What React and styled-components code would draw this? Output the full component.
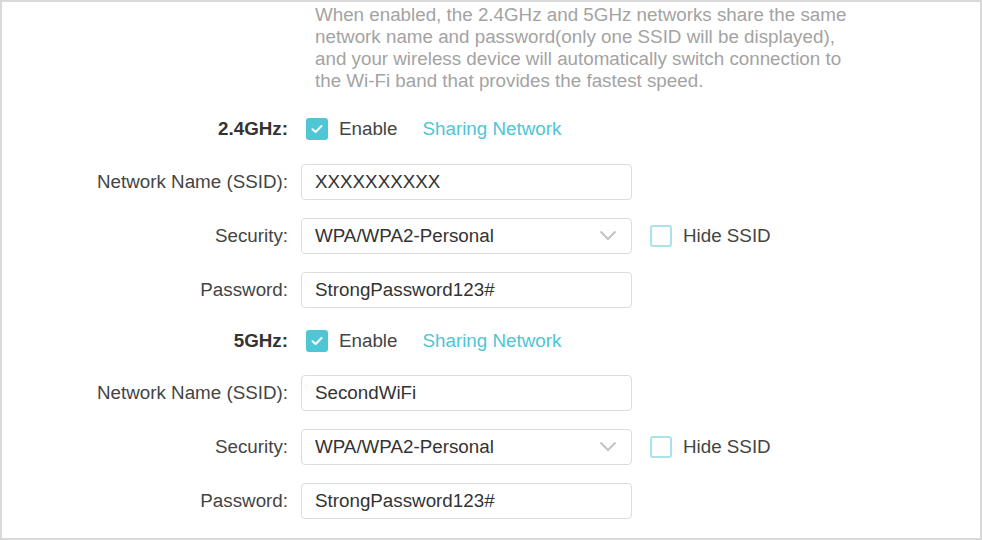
import React, { useState } from 'react'
import styled, { createGlobalStyle } from 'styled-components'

const GlobalStyle = createGlobalStyle`
  html, body {
    margin: 0;
    padding: 0;
    background: #ffffff;
  }
  * {
    box-sizing: border-box;
  }
`

const teal = '#4ec6d4'

const Frame = styled.div`
  width: 982px;
  height: 540px;
  border: 2px solid #d9d9d9;
  background: #fff;
  font-family: "Liberation Sans", Arial, sans-serif;
  font-size: 18.8px;
  color: #333;
  overflow: hidden;
`

const Note = styled.p`
  margin: 0;
  padding: 2px 0 0 313px;
  color: #a3a3a3;
  line-height: 22px;
  white-space: nowrap;
`

const Row = styled.div`
  display: flex;
  align-items: center;
  min-height: 36px;
  margin-top: ${(p) => p.$gap}px;
`

const Label = styled.div`
  width: 286px;
  text-align: right;
  margin-right: 13px;
  font-weight: ${(p) => (p.$bold ? 700 : 400)};
  color: ${(p) => (p.$bold ? '#333' : '#444')};
  white-space: nowrap;
`

const Field = styled.div`
  position: relative;
  width: 331px;
  height: 36px;
  border: 1px solid #dcdcdc;
  border-radius: 4px;
  display: flex;
  align-items: center;
  padding: 0 13px;
  color: #333;
`

const Chevron = styled.svg`
  position: absolute;
  right: 14px;
  top: 50%;
  margin-top: -6px;
`

const Box = styled.span`
  display: inline-flex;
  align-items: center;
  justify-content: center;
  width: 22px;
  height: 22px;
  border-radius: 3px;
  background: ${(p) => (p.$on ? teal : '#fff')};
  border: ${(p) => (p.$on ? 'none' : `2px solid #a9e2e8`)};
  flex-shrink: 0;
`

const Check = styled.label`
  display: inline-flex;
  align-items: center;
  gap: 11px;
  margin-left: ${(p) => p.$offset}px;
  cursor: pointer;
  color: #444;
`

const Link = styled.span`
  margin-left: 25px;
  color: ${teal};
`

const Tick = () => (
  <svg width="12" height="10" viewBox="0 0 12 10">
    <path d="M1.5 5.2 L4.6 8 L10.5 2" fill="none" stroke="#fff" strokeWidth="2" strokeLinecap="round" strokeLinejoin="round" />
  </svg>
)

const Band = ({ name, ssid, first }) => {
  const [hide, setHide] = useState(false)
  return (
    <>
      <Row $gap={first ? 19 : 15}>
        <Label $bold>{name}:</Label>
        <Check $offset={5}>
          <Box $on><Tick /></Box>
          Enable
        </Check>
        <Link>Sharing Network</Link>
      </Row>
      <Row $gap={first ? 17 : 16}>
        <Label>Network Name (SSID):</Label>
        <Field>{ssid}</Field>
      </Row>
      <Row $gap={18}>
        <Label>Security:</Label>
        <Field>
          WPA/WPA2-Personal
          <Chevron width="18" height="11" viewBox="0 0 18 11">
            <path d="M1.5 1.5 L9 9 L16.5 1.5" fill="none" stroke="#c4c4c4" strokeWidth="2" />
          </Chevron>
        </Field>
        <Check $offset={18} onClick={() => setHide(!hide)}>
          <Box $on={hide}>{hide && <Tick />}</Box>
          Hide SSID
        </Check>
      </Row>
      <Row $gap={18}>
        <Label>Password:</Label>
        <Field>StrongPassword123#</Field>
      </Row>
    </>
  )
}

const App = () => {
  return (
    <Frame>
      <GlobalStyle />
      <Note>
        When enabled, the 2.4GHz and 5GHz networks share the same<br />
        network name and password(only one SSID will be displayed),<br />
        and your wireless device will automatically switch connection to<br />
        the Wi-Fi band that provides the fastest speed.
      </Note>
      <Band name="2.4GHz" ssid="XXXXXXXXXX" first />
      <Band name="5GHz" ssid="SecondWiFi" />
    </Frame>
  )
}

export default App
